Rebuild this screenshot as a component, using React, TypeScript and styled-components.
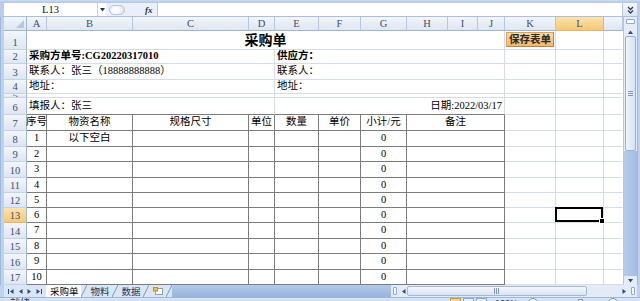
import React from 'react';
import styled, { createGlobalStyle, css } from 'styled-components';

const GlobalStyle = createGlobalStyle`
  html, body { margin: 0; padding: 0; background: #fff; }
  body {
    width: 640px;
    height: 301px;
    overflow: hidden;
    font-family: "Liberation Serif", "Noto Sans CJK SC", serif;
  }
`;

type Tone = 'grid' | 'table' | 'none';

type Spec = {
  span?: number;
  text?: string;
  align?: 'left' | 'center' | 'right';
  bold?: boolean;
  title?: boolean;
  right?: Tone;
  bottom?: Tone;
  button?: boolean;
  selected?: boolean;
};

const COLS = [20, 86, 116, 26, 44, 42, 46, 41, 30, 27, 51, 48, 19];
const LETTERS = ['A', 'B', 'C', 'D', 'E', 'F', 'G', 'H', 'I', 'J', 'K', 'L', ''];
const ROWS = [19, 14, 16, 14, 4, 17, 16, 16, 15, 16, 15, 15, 15, 16, 15, 16, 15];

const tone = (t?: Tone) => (t === 'table' ? '#7c7c7c' : t === 'none' ? 'transparent' : '#d7dde6');

// rows 1-6, columns A..J
const topRows: Spec[][] = [
  [{ span: 10, text: '采购单', align: 'center', title: true }],
  [
    { span: 4, text: '采购方单号:CG20220317010', bold: true },
    { span: 6, text: '供应方：', bold: true },
  ],
  [{ span: 4, text: '联系人：张三（18888888888）' }, { span: 6, text: '联系人：' }],
  [{ span: 4, text: '地址：' }, { span: 6, text: '地址：' }],
  [{ span: 4 }, { span: 6 }],
  [
    { span: 4, text: '填报人：张三', bottom: 'table' },
    { span: 6, text: '日期:2022/03/17', align: 'right', bottom: 'table' },
  ],
];

const headRow: Spec[] = [
  ...['序号', '物资名称', '规格尺寸', '单位', '数量', '单价', '小计/元'].map(
    (t): Spec => ({ text: t, align: 'center', right: 'table', bottom: 'table' })
  ),
  { span: 3, text: '备注', align: 'center', right: 'table', bottom: 'table' },
];

const itemRow = (n: number): Spec[] => {
  const c = (text = '', span = 1): Spec => ({ text, span, align: 'center', right: 'table', bottom: 'table' });
  return [c(String(n)), c(n === 1 ? '以下空白' : ''), c(), c(), c(), c(), c('0'), c('', 3)];
};

const sideCols = (r: number): Spec[] => [
  r === 1 ? { button: true } : {},
  { selected: r === 13 },
  { right: 'none' },
];

const allRows: Spec[][] = [
  ...topRows,
  headRow,
  ...Array.from({ length: 10 }, (_, i) => itemRow(i + 1)),
].map((row, i) => [...row, ...sideCols(i + 1)]);

/* ---------- frame ---------- */

const Window = styled.div`
  width: 640px;
  height: 301px;
  display: flex;
  flex-direction: column;
  overflow: hidden;
  background: #fff;
`;

const TopStrip = styled.div`
  height: 3px;
  background: linear-gradient(#cddcf0, #aec6e6);
`;

const FormulaBar = styled.div`
  height: 14px;
  box-sizing: border-box;
  display: flex;
  align-items: stretch;
  background: #e9f0f9;
  border-bottom: 1px solid #a9c0dd;
  border-left: 4px solid #b9cfec;
  border-right: 3px solid #b9cfec;
`;

const NameBox = styled.div`
  width: 93px;
  background: #fff;
  border-right: 1px solid #c4d3e6;
  display: flex;
  align-items: center;
  justify-content: center;
  font-size: 10.5px;
  color: #111;
`;

const NameDrop = styled.div`
  width: 8px;
  display: flex;
  align-items: center;
  justify-content: center;
  background: #fff;
`;

const SplitterArea = styled.div`
  width: 48px;
  display: flex;
  align-items: center;
  padding-left: 3px;
  gap: 20px;
`;

const Splitter = styled.div`
  width: 16px;
  height: 10px;
  border-radius: 6px;
  border: 1px solid #b9c3d1;
  background: radial-gradient(circle at 40% 50%, #fbfcfe 30%, #dfe5ee 80%);
  box-sizing: border-box;
`;

const FxLabel = styled.span`
  font-size: 9px;
  font-style: italic;
  font-weight: 700;
  color: #333;
`;

const FormulaInput = styled.div`
  flex: 1;
  background: #fff;
  border-left: 1px solid #b7c8de;
  border-right: 1px solid #b7c8de;
`;

const ExpandButton = styled.div`
  width: 14px;
  display: flex;
  align-items: center;
  justify-content: center;
  background: linear-gradient(#f4f7fb, #dce5f1);
`;

const Main = styled.div`
  display: flex;
  height: 268px;
`;

const SideFrame = styled.div<{ $w: number }>`
  width: ${(p) => p.$w}px;
  background: #bed2ee;
  box-sizing: border-box;
  border-left: 1px solid #9fb9de;
`;

/* ---------- sheet ---------- */

const Sheet = styled.div`
  display: grid;
  grid-template-columns: 23px ${COLS.map((c) => `${c}px`).join(' ')};
  grid-template-rows: 14px ${ROWS.map((r) => `${r}px`).join(' ')};
  width: 619px;
  overflow: hidden;
  background: #fff;
`;

const headerBg = css<{ $active?: boolean }>`
  background: ${(p) =>
    p.$active ? 'linear-gradient(#fbe3b0, #f5c873)' : 'linear-gradient(#f3f6fb, #dde6f2)'};
`;

const Corner = styled.div`
  background: linear-gradient(#f3f6fb, #dde6f2);
  border-right: 1px solid #9eb6ce;
  border-bottom: 1px solid #9eb6ce;
  box-sizing: border-box;
  display: flex;
  align-items: flex-end;
  justify-content: flex-end;
  padding: 0 2px 2px 0;
`;

const ColHead = styled.div<{ $active?: boolean }>`
  ${headerBg};
  box-sizing: border-box;
  border-right: 1px solid ${(p) => (p.$active ? '#e7b463' : '#b4c7de')};
  border-bottom: 1px solid ${(p) => (p.$active ? '#e7b463' : '#9eb6ce')};
  display: flex;
  align-items: center;
  justify-content: center;
  font-size: 10.5px;
  color: #3b4f6e;
`;

const RowHead = styled.div<{ $active?: boolean; $tiny?: boolean }>`
  ${headerBg};
  box-sizing: border-box;
  border-right: 1px solid #9eb6ce;
  border-bottom: 1px solid ${(p) => (p.$active ? '#e7b463' : '#c3d2e5')};
  display: flex;
  align-items: ${(p) => (p.$tiny ? 'flex-start' : 'flex-end')};
  justify-content: center;
  font-size: 10.5px;
  line-height: ${(p) => (p.$tiny ? '3px' : '13px')};
  color: #3b4f6e;
  overflow: hidden;
`;

const Cell = styled.div<{
  $span?: number;
  $align?: string;
  $right?: Tone;
  $bottom?: Tone;
  $bold?: boolean;
  $title?: boolean;
}>`
  grid-column: span ${(p) => p.$span ?? 1};
  box-sizing: border-box;
  position: relative;
  display: flex;
  align-items: center;
  justify-content: ${(p) =>
    p.$align === 'center' ? 'center' : p.$align === 'right' ? 'flex-end' : 'flex-start'};
  padding: ${(p) => (p.$title ? '2px 0 0' : '0 2px')};
  border-right: 1px solid ${(p) => tone(p.$right)};
  border-bottom: 1px solid ${(p) => tone(p.$bottom)};
  font-size: ${(p) => (p.$title ? 14 : 10.5)}px;
  font-weight: ${(p) => (p.$bold || p.$title ? 700 : 400)};
  color: #000;
  white-space: nowrap;
  line-height: 1;
`;

const SaveButton = styled.div`
  position: absolute;
  inset: 1px 1px 2px 1px;
  display: flex;
  align-items: center;
  justify-content: center;
  background: linear-gradient(#fcd9a4, #f5b76a);
  border: 1px solid #d9a35f;
  border-right-color: #b98446;
  border-bottom-color: #b98446;
  font-size: 10.5px;
  font-weight: 700;
  color: #2a2a2a;
  font-family: "Noto Sans CJK SC", sans-serif;
`;

const Selection = styled.div`
  position: absolute;
  top: -1px;
  left: -1px;
  right: 0;
  bottom: 0;
  border: 2px solid #000;
  z-index: 2;
`;

const FillHandle = styled.div`
  position: absolute;
  right: -4px;
  bottom: -4px;
  width: 4px;
  height: 4px;
  background: #000;
  border: 1px solid #fff;
`;

/* ---------- vertical scroll ---------- */

const VScroll = styled.div`
  width: 14px;
  box-sizing: border-box;
  display: flex;
  flex-direction: column;
  background: #e4ecf7;
  border-left: 1px solid #b3c7e2;
`;

const SplitBox = styled.div`
  height: 3px;
  margin: 2px 2px 3px;
  border: 1px solid #8ea8cc;
  border-radius: 1px;
  background: #fff;
`;

const ArrowBtn = styled.div<{ $h?: number; $w?: number }>`
  ${(p) => (p.$h ? `height: ${p.$h}px;` : '')}
  ${(p) => (p.$w ? `width: ${p.$w}px;` : '')}
  display: flex;
  align-items: center;
  justify-content: center;
  flex-shrink: 0;
`;

const VThumb = styled.div`
  height: 115px;
  margin: 0 1px;
  box-sizing: border-box;
  border: 1px solid #98b0d2;
  border-radius: 2px;
  background: linear-gradient(to right, #f1f5fb, #d5e1f2);
  display: flex;
  align-items: center;
  justify-content: center;
`;

const VTrack = styled.div`
  flex: 1;
  background: linear-gradient(to right, #b5cbea, #a3bde3);
`;

const Grip = styled.div<{ $vertical?: boolean }>`
  width: ${(p) => (p.$vertical ? 5 : 6)}px;
  height: ${(p) => (p.$vertical ? 5 : 6)}px;
  background: ${(p) =>
    p.$vertical
      ? 'repeating-linear-gradient(#7f98bb 0 1px, transparent 1px 2px)'
      : 'repeating-linear-gradient(to right, #7f98bb 0 1px, transparent 1px 2px)'};
`;

/* ---------- tabs + hscroll ---------- */

const TabBar = styled.div`
  height: 12px;
  display: flex;
  background: #dbe6f4;
  border-left: 4px solid #bed2ee;
  border-right: 3px solid #bed2ee;
`;

const TabNav = styled.div`
  width: 42px;
  display: flex;
  align-items: center;
  justify-content: space-around;
  padding: 0 2px;
  box-sizing: border-box;
`;

const SheetTab = styled.div<{ $active?: boolean }>`
  display: flex;
  align-items: center;
  padding: 0 2px 0 4px;
  background: ${(p) => (p.$active ? '#fff' : 'transparent')};
  font-family: "Noto Sans CJK SC", sans-serif;
  font-size: 9.5px;
  color: ${(p) => (p.$active ? '#000' : '#1f3350')};
  white-space: nowrap;
`;

const TabFill = styled.div`
  flex: 1;
  background: linear-gradient(#b3c9e8, #98b4dc);
`;

const HScroll = styled.div`
  width: 246px;
  display: flex;
  align-items: stretch;
  background: #e2ebf7;
`;

const SplitMark = styled.div`
  width: 2px;
  margin: 2px 2px;
  background: #fff;
  border: 1px solid #8ea8cc;
  border-radius: 1px;
`;

const HThumb = styled.div`
  width: 180px;
  margin: 1px 0;
  box-sizing: border-box;
  border: 1px solid #a3b8d5;
  border-radius: 2px;
  background: linear-gradient(#f4f7fc, #dae4f2);
  display: flex;
  align-items: center;
  justify-content: center;
`;

const HTrack = styled.div`
  flex: 1;
`;

/* ---------- status ---------- */

const StatusBar = styled.div`
  height: 4px;
  overflow: hidden;
  display: flex;
  align-items: flex-start;
  background: linear-gradient(#dde8f6, #cddcf0);
  border-top: 1px solid #9db6d9;
  box-sizing: border-box;
  padding-left: 10px;
  font-family: "Noto Sans CJK SC", sans-serif;
  font-size: 10px;
  color: #1c2e4a;
`;

const StatusText = styled.span`
  line-height: 12px;
  margin-top: -1px;
`;

const StatusRight = styled.div`
  margin-left: auto;
  display: flex;
  align-items: flex-start;
  gap: 2px;
  padding-right: 22px;
`;

const ViewBtn = styled.div<{ $on?: boolean }>`
  width: 9px;
  height: 9px;
  border: 1px solid ${(p) => (p.$on ? '#c79a48' : '#8ea8cc')};
  background: ${(p) => (p.$on ? '#f8d58c' : '#e9eff8')};
`;

const ZoomText = styled.span`
  font-family: "Liberation Sans", sans-serif;
  font-size: 9px;
  line-height: 12px;
  margin: -1px 8px 0 6px;
`;

const ZoomCircle = styled.div`
  width: 10px;
  height: 10px;
  border-radius: 50%;
  border: 1px solid #7d96ba;
  background: #f3f6fb;
  box-sizing: border-box;
`;

const ZoomSlider = styled.div`
  width: 66px;
  display: flex;
  justify-content: center;
  padding-top: 1px;
`;

const SliderKnob = styled.div`
  width: 3px;
  height: 8px;
  background: #fff;
  border: 1px solid #7d96ba;
  margin-left: 14px;
`;

/* ---------- icons ---------- */

const Tri = ({ dir, color = '#2a4a82', size = 5 }: { dir: 'up' | 'down' | 'left' | 'right'; color?: string; size?: number }) => {
  const pts = {
    up: '0,5 5,5 2.5,1.5',
    down: '0,1 5,1 2.5,4.5',
    left: '4.5,0 4.5,5 1,2.5',
    right: '0.5,0 0.5,5 4,2.5',
  }[dir];
  return (
    <svg width={size} height={size} viewBox="0 0 5 5">
      <polygon points={pts} fill={color} />
    </svg>
  );
};

const NavFirst = () => (
  <svg width="6" height="5" viewBox="0 0 6 5">
    <rect x="0" y="0" width="1" height="5" fill="#2a4a82" />
    <polygon points="5.5,0 5.5,5 2,2.5" fill="#2a4a82" />
  </svg>
);

const NavLast = () => (
  <svg width="6" height="5" viewBox="0 0 6 5">
    <polygon points="0.5,0 0.5,5 4,2.5" fill="#2a4a82" />
    <rect x="5" y="0" width="1" height="5" fill="#2a4a82" />
  </svg>
);

const Slant = () => (
  <svg width="6" height="12" viewBox="0 0 6 12">
    <line x1="0" y1="12" x2="6" y2="0" stroke="#7d96ba" strokeWidth="1" />
  </svg>
);

const NewSheetIcon = () => (
  <svg width="11" height="9" viewBox="0 0 11 9">
    <rect x="2.5" y="1.5" width="7" height="6" fill="#fff" stroke="#8f9fb5" />
    <rect x="0.5" y="0.5" width="4" height="3.5" fill="#f2c14e" stroke="#c48d1e" />
  </svg>
);

const CornerTri = () => (
  <svg width="8" height="8" viewBox="0 0 8 8">
    <polygon points="8,0 8,8 0,8" fill="#b9c8dc" />
  </svg>
);

const DoubleChevron = () => (
  <svg width="7" height="8" viewBox="0 0 7 8">
    <polyline points="1,1 3.5,3.5 6,1" fill="none" stroke="#2c3e5a" strokeWidth="1.3" />
    <polyline points="1,4.5 3.5,7 6,4.5" fill="none" stroke="#2c3e5a" strokeWidth="1.3" />
  </svg>
);

export default function App() {
  return (
    <Window>
      <GlobalStyle />
      <TopStrip />
      <FormulaBar>
        <NameBox>L13</NameBox>
        <NameDrop>
          <Tri dir="down" color="#333" size={5} />
        </NameDrop>
        <SplitterArea>
          <Splitter />
          <FxLabel>fx</FxLabel>
        </SplitterArea>
        <FormulaInput />
        <ExpandButton>
          <DoubleChevron />
        </ExpandButton>
      </FormulaBar>

      <Main>
        <SideFrame $w={4} />
        <Sheet>
          <Corner>
            <CornerTri />
          </Corner>
          {LETTERS.map((l, i) => (
            <ColHead key={i} $active={l === 'L'}>
              {l}
            </ColHead>
          ))}
          {allRows.map((specs, i) => {
            const r = i + 1;
            return (
              <React.Fragment key={r}>
                <RowHead $active={r === 13} $tiny={ROWS[i] < 8}>
                  {r}
                </RowHead>
                {specs.map((s, j) => (
                  <Cell
                    key={j}
                    $span={s.span}
                    $align={s.align}
                    $right={s.right}
                    $bottom={s.bottom}
                    $bold={s.bold}
                    $title={s.title}
                  >
                    {s.button ? <SaveButton>保存表单</SaveButton> : s.text}
                    {s.selected && (
                      <Selection>
                        <FillHandle />
                      </Selection>
                    )}
                  </Cell>
                ))}
              </React.Fragment>
            );
          })}
        </Sheet>
        <VScroll>
          <SplitBox />
          <ArrowBtn $h={9}>
            <Tri dir="up" />
          </ArrowBtn>
          <VThumb>
            <Grip $vertical />
          </VThumb>
          <VTrack />
          <ArrowBtn $h={9}>
            <Tri dir="down" />
          </ArrowBtn>
        </VScroll>
        <SideFrame $w={3} />
      </Main>

      <TabBar>
        <TabNav>
          <NavFirst />
          <Tri dir="left" />
          <Tri dir="right" />
          <NavLast />
        </TabNav>
        <SheetTab $active>采购单</SheetTab>
        <Slant />
        <SheetTab>物料</SheetTab>
        <Slant />
        <SheetTab>数据</SheetTab>
        <Slant />
        <SheetTab>
          <NewSheetIcon />
        </SheetTab>
        <Slant />
        <TabFill />
        <HScroll>
          <SplitMark />
          <ArrowBtn $w={8}>
            <Tri dir="left" />
          </ArrowBtn>
          <HThumb>
            <Grip />
          </HThumb>
          <HTrack />
          <ArrowBtn $w={10}>
            <Tri dir="right" />
          </ArrowBtn>
          <SplitMark />
        </HScroll>
      </TabBar>

      <StatusBar>
        <StatusText>就绪</StatusText>
        <StatusRight>
          <ViewBtn $on />
          <ViewBtn />
          <ViewBtn />
          <ZoomText>100%</ZoomText>
          <ZoomCircle />
          <ZoomSlider>
            <SliderKnob />
          </ZoomSlider>
          <ZoomCircle />
        </StatusRight>
      </StatusBar>
    </Window>
  );
}
